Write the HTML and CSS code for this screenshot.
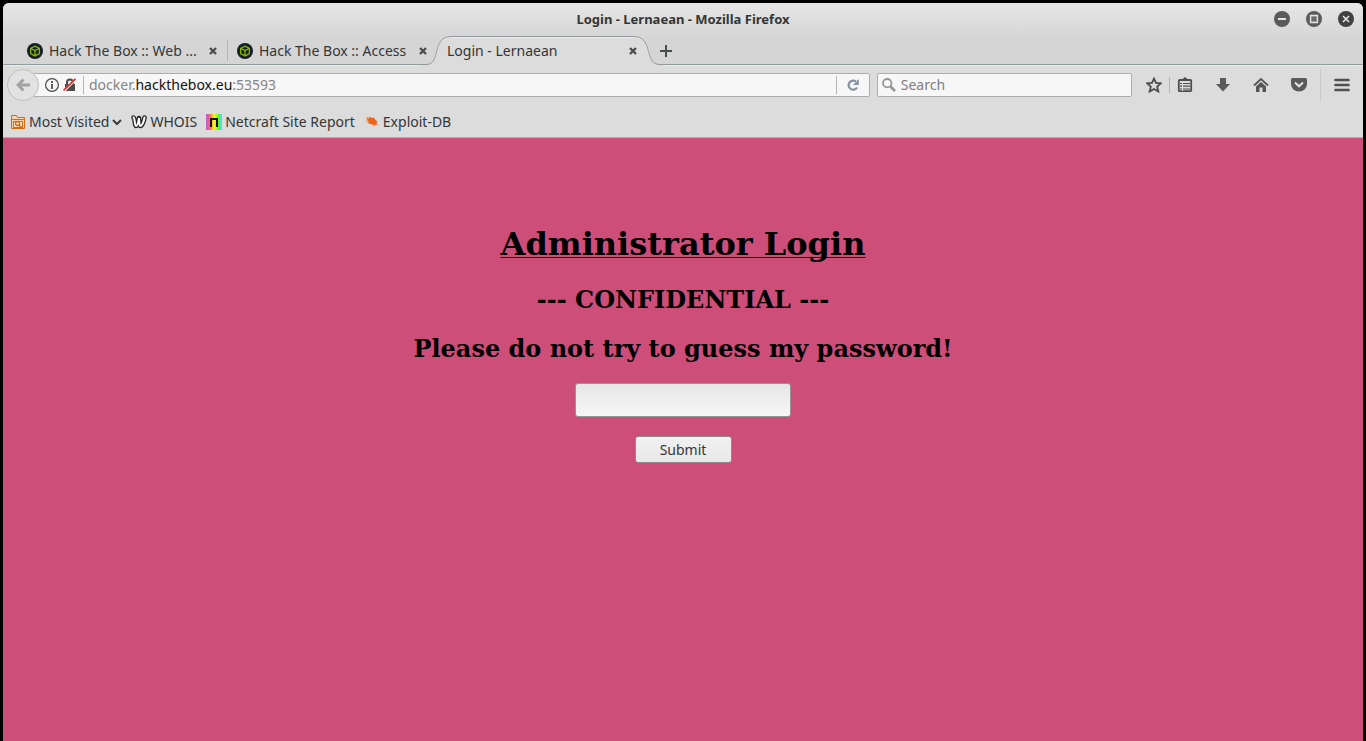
FILE: index.html
```html
<!DOCTYPE html>
<html lang="en">
<head>
<meta charset="utf-8">
<title>Login - Lernaean</title>
<link rel="stylesheet" href="styles.css">
</head>
<body>
<svg class="defs" aria-hidden="true">
  <symbol id="htb" viewBox="0 0 16 16">
    <circle cx="8" cy="8" r="8" fill="#141d2b"/>
    <path d="M8 3.200 12.400 5.400v5.200L8 12.900 3.600 10.600V5.400zM3.600 5.400 8 7.500l4.400-2.100M8 7.500v5.400" fill="none" stroke="#86b300" stroke-width="1.300"/>
  </symbol>
  <symbol id="cross" viewBox="0 0 8 8">
    <path d="M1 1l6 6M7 1L1 7" fill="none" stroke="#4a4d4e" stroke-width="2.400"/>
  </symbol>
</svg>
<div class="window">
  <header class="chrome">
    <div class="titlebar">
      <div class="title">Login - Lernaean - Mozilla Firefox</div>
      <div class="controls">
        <button class="icon-button" aria-label="Minimize"><svg width="16" height="16"><circle cx="8" cy="8" r="8" fill="#5b5b5b"/><path d="M4 8h8" stroke="#e4e4e4" stroke-width="2"/></svg></button>
        <button class="icon-button" aria-label="Maximize"><svg width="16" height="16"><circle cx="8" cy="8" r="8" fill="#5b5b5b"/><path d="M4.500 4.500h7v7h-7z" fill="#858585" stroke="#e4e4e4" stroke-width="1.300"/><path d="M6 6h4v4H6z" fill="#686868"/></svg></button>
        <button class="icon-button" aria-label="Close"><svg width="16" height="16"><circle cx="8" cy="8" r="8" fill="#414141"/><path d="M5 5l6 6M11 5l-6 6" stroke="#e4e4e4" stroke-width="1.600"/></svg></button>
      </div>
    </div>
    <nav class="tabs" aria-label="Tabs">
      <div class="tab divided"><svg class="favicon"><use href="#htb"/></svg><span class="tab-label">Hack The Box :: Web ...</span><button class="icon-button" aria-label="Close tab"><svg width="8" height="8"><use href="#cross"/></svg></button></div>
      <div class="tab"><svg class="favicon"><use href="#htb"/></svg><span class="tab-label">Hack The Box :: Access</span><button class="icon-button" aria-label="Close tab"><svg width="8" height="8"><use href="#cross"/></svg></button></div>
      <div class="tab active">
        <svg class="tab-shape" width="244" height="30" viewBox="0 0 244 30"><path d="M0 30V28.500H6C22 28.500 10 .5 32 .5H213C235 .5 223 28.500 240 28.500H244V30z" fill="#dcdcdc"/><path d="M13 25C18 18 13 1.500 32 1.500H213C232 1.500 227 18 232 25" fill="none" stroke="#ececec"/><path d="M0 28.500H6C22 28.500 10 .5 32 .5H213C235 .5 223 28.500 240 28.500H244" fill="none" stroke="#939a9e"/></svg>
        <span class="tab-label">Login - Lernaean</span><button class="icon-button" aria-label="Close tab"><svg width="8" height="8"><use href="#cross"/></svg></button>
      </div>
      <button class="icon-button new-tab" aria-label="New tab"><svg width="12" height="12"><path d="M6 0v12M0 6h12" stroke="#4a4d4e" stroke-width="2"/></svg></button>
    </nav>
    <div class="toolbar">
      <button class="back" aria-label="Back"><svg width="14" height="14"><path d="M7.500 1.500 2 7l5.500 5.500M2.500 7H14" fill="none" stroke="#a3a3a3" stroke-width="3"/></svg></button>
      <div class="address">
        <svg width="14" height="14"><circle cx="7" cy="7" r="6.400" fill="none" stroke="#4c4c4c" stroke-width="1.200"/><path d="M7 3v2M7 6v5" stroke="#4c4c4c" stroke-width="1.800"/></svg>
        <svg width="14" height="14"><path d="M4 7V4.500a3 3 0 0 1 6 0V7" fill="none" stroke="#4c4c4c" stroke-width="2"/><path d="M2 6h10v7H2z" fill="#4c4c4c"/><path d="M.5 13.500 13 1" stroke="#f7f7f7" stroke-width="2.400"/><path d="M.5 12.500 12.500.8" stroke="#dc2e2e" stroke-width="1.700"/></svg>
        <span class="url">docker.<strong>hackthebox.eu</strong>:53593</span>
        <button class="icon-button reload" aria-label="Reload"><svg width="12" height="12"><path d="M10 8.500A4.500 4.500 0 1 1 9 2.700" fill="none" stroke="#8494a1" stroke-width="2.200"/><path d="M11.800 0v6H6z" fill="#8494a1"/></svg></button>
      </div>
      <label class="search"><svg width="14" height="14"><circle cx="5.200" cy="5.200" r="4.200" fill="none" stroke="#969696" stroke-width="1.800"/><path d="M8.500 8.500l4.500 4.500" stroke="#969696" stroke-width="2.600"/></svg><input type="search" placeholder="Search" aria-label="Search"></label>
      <div class="actions">
        <button class="icon-button star" aria-label="Bookmark"><svg width="16" height="16"><path d="M8 1.500l2 4.400 4.800.5-3.600 3.200 1.100 4.900L8 12l-4.300 2.500 1.100-4.900L1.200 6.400 6 5.900z" fill="none" stroke="#4d4d4d" stroke-width="1.800"/></svg></button>
        <button class="icon-button" aria-label="Show bookmarks"><svg width="16" height="16"><path d="M4.500 3 8 0 11.500 3z" fill="#4d4d4d"/><rect x="1.800" y="3" width="12.400" height="11.200" rx="1" fill="none" stroke="#4d4d4d" stroke-width="1.800"/><path d="M3 6.500h10M3 9.200h10M3 12h10" stroke="#4d4d4d" stroke-width="1.200"/><path d="M5.500 4v10" stroke="#dcdcdc"/></svg></button>
        <button class="icon-button" aria-label="Downloads"><svg width="16" height="16"><path d="M5 1h6v6h4l-7 7.500L1 7h4z" fill="#5a5a5a"/></svg></button>
        <button class="icon-button" aria-label="Home"><svg width="16" height="16"><path d="M1 8.500 8 2l7 6.500" fill="none" stroke="#555" stroke-width="1.800"/><path d="M3 9.500 8 5l5 4.500V15H9.500v-4.500h-3V15H3z" fill="#555"/></svg></button>
        <button class="icon-button" aria-label="Pocket"><svg width="16" height="16"><path d="M1.500 1h13Q16 1 16 2.500V7A8 7.500 0 0 1 0 7V2.500Q0 1 1.500 1z" fill="#5a5a5a"/><path d="M4 5.500 8 9.300l4-3.800" fill="none" stroke="#e4e4e4" stroke-width="2"/></svg></button>
      </div>
      <button class="icon-button menu" aria-label="Menu"><svg width="16" height="14"><path d="M1.500 2h13M1.500 7h13M1.500 12h13" stroke="#505050" stroke-width="2.600" stroke-linecap="round"/></svg></button>
    </div>
    <nav class="bookmarks" aria-label="Bookmarks">
      <button class="bookmark"><svg width="16" height="16"><path d="M1.500 14.500v-13h5l1 2h7v11z" fill="#f6d3ae" stroke="#cf6c14"/><path d="M1.500 5.500h13" stroke="#cf6c14"/><rect x="3.500" y="7.500" width="9" height="6" fill="#f5e2cb" stroke="#cf6c14"/><circle cx="7.500" cy="9.500" r="2" fill="none" stroke="#cf6c14" stroke-width="1.300"/><path d="M9 11l2.500 2.500" stroke="#cf6c14" stroke-width="1.500"/></svg>Most Visited<svg width="10" height="8"><path d="M1 2l4 4 4-4" fill="none" stroke="#3d3d3d" stroke-width="2"/></svg></button>
      <a class="bookmark" href="#"><svg width="16" height="16"><path d="M2.500 3.500C4 3.500 3.500 12 5 12S7.500 7 8 4C8.500 8 8 12 9.500 12S13 7 13.500 3.500" fill="none" stroke="#222" stroke-width="4.600" stroke-linejoin="round" stroke-linecap="round"/><path d="M2.500 3.500C4 3.500 3.500 12 5 12S7.500 7 8 4C8.500 8 8 12 9.500 12S13 7 13.500 3.500" fill="none" stroke="#fff" stroke-width="2" stroke-linecap="round"/></svg>WHOIS</a>
      <a class="bookmark" href="#"><span class="netcraft"><svg width="16" height="16"><path d="M5 13V5h6v8" fill="none" stroke="#111" stroke-width="2"/></svg></span>Netcraft Site Report</a>
      <a class="bookmark" href="#"><svg width="16" height="16"><path d="M2 4l3 .5L5 2.500l3 1.500 2-.5 1 2 2.500 2-1 1 1.500 2-2.500-.2.500 1.500-2.500-1-1 .5-1.500-1.500-2.500.3L5 8.500 3 8l1-1.500z" fill="#ef6514"/><path d="M2 2.500l3 2M1 7h4M9 10l1 3M12 10l2.500 1.500" stroke="#f29662" stroke-width=".7"/></svg>Exploit-DB</a>
    </nav>
  </header>
  <main class="page">
    <h1>Administrator Login</h1>
    <h2>--- CONFIDENTIAL ---</h2>
    <h2>Please do not try to guess my password!</h2>
    <form>
      <input class="password" type="password" aria-label="Password">
      <button class="submit" type="button">Submit</button>
    </form>
  </main>
</div>
</body>
</html>
```
FILE: styles.css
```css
* { box-sizing: border-box; }
body {
  margin: 0;
  background: #000;
  color: #333637;
  font: 14px/20px "Noto Sans", "Open Sans", sans-serif;
}
svg { display: block; flex: none; }
.defs { position: absolute; width: 0; height: 0; }
button, input { font: inherit; color: inherit; }
.window {
  display: flex;
  flex-direction: column;
  min-height: 100vh;
  padding: 3px 3px 0;
}
.chrome {
  background: #dcdcdc;
  border-bottom: 1px solid #b0b0b0;
  border-radius: 6px 6px 0 0;
  background-image: linear-gradient(#e6e6e6, #d5d5d5 36px, #d5d5d5 62px, transparent 62px);
}
.icon-button {
  display: flex;
  align-items: center;
  justify-content: center;
  padding: 0;
  border: 0;
  background: none;
}
.titlebar {
  display: grid;
  grid-template-columns: 1fr auto 1fr;
  align-items: center;
  height: 33px;
  padding: 0 9px 2px;
}
.title { grid-column: 2; font-weight: bold; font-size: 13px; }
.controls { display: flex; gap: 16px; justify-content: flex-end; }
.tabs {
  display: flex;
  height: 29px;
  padding-left: 14px;
  border-bottom: 1px solid #939a9e;
}
.tab {
  position: relative;
  display: flex;
  align-items: center;
  width: 210px;
  gap: 6px;
  padding: 2px 10px 0;
}
.divided::after {
  content: "";
  position: absolute;
  right: -1px;
  top: 4px;
  width: 1px;
  height: 21px;
  background: #b5b5b5;
}
.favicon { width: 16px; height: 16px; }
.tab-label { position: relative; flex: 1; white-space: nowrap; }
.tab .icon-button { position: relative; }
.tab-shape { position: absolute; left: -17px; top: 0; }
.new-tab { margin-left: 13px; padding-top: 2px; }
.toolbar {
  display: flex;
  align-items: center;
  height: 39px;
  padding: 0 13px 0 4px;
  border-top: 1px solid #ebebeb;
}
.back {
  position: relative;
  display: grid;
  place-items: center;
  width: 32px;
  height: 32px;
  padding: 0;
  border: 1px solid #bfbfbf;
  border-radius: 50%;
  background: #e2e2e2;
}
.address, .search {
  display: flex;
  align-items: center;
  height: 24px;
  border: 1px solid #adadad;
  border-radius: 2px;
  background: #f7f7f7;
}
.address { flex: 823 1 0; gap: 4px; margin-left: -6px; padding-left: 11px; }
.url {
  flex: 1;
  margin-left: 2px;
  padding-left: 5px;
  border-left: 1px solid #b5b5b5;
  line-height: 18px;
  color: #858585;
}
.url strong { font-weight: normal; color: #111; }
.reload { width: 33px; height: 18px; border-left: 1px solid #b5b5b5; }
.search { flex: 249 1 0; gap: 5px; margin-left: 7px; padding-left: 4px; }
.search input {
  flex: 1;
  min-width: 0;
  padding: 0;
  border: 0;
  outline: 0;
  background: none;
}
.search input::placeholder { color: #808080; opacity: 1; }
.actions { display: flex; gap: 22px; margin: 0 13px 0 14px; }
.star { width: 24px; margin-right: -15px; padding-right: 7px; border-right: 1px solid #b5b5b5; }
.menu { width: 30px; height: 32px; padding-left: 13px; border-left: 1px solid #cbcbcb; }
.bookmarks { display: flex; align-items: center; gap: 9px; height: 33px; padding: 2px 7px 0; }
.bookmark {
  display: flex;
  align-items: center;
  gap: 3px;
  padding: 0;
  border: 0;
  background: none;
  color: inherit;
  text-decoration: none;
}
.netcraft {
  background: linear-gradient(90deg, #b85fd8, #f06090 20%, #ff9b20 34%, #f9f91c 50%, #63f91c 78%, #52d8ef 92%);
}
.page {
  flex: 1;
  padding: 87px 16px 40px;
  background: #cd4e78;
  color: #000;
  font-family: "DejaVu Serif", serif;
  text-align: center;
}
h1, h2 { margin: 0 0 20px; }
h1 {
  margin-bottom: 22px;
  font-size: 32px;
  line-height: 38px;
  text-decoration: underline 1px;
  text-decoration-skip-ink: none;
  text-underline-offset: 2px;
}
h2 { font-size: 24px; line-height: 29px; }
form {
  display: flex;
  flex-direction: column;
  align-items: center;
  gap: 19px;
  font-family: "Noto Sans", "Open Sans", sans-serif;
}
.password {
  width: 216px;
  height: 34px;
  padding: 4px 8px;
  border: 1px solid #969696;
  border-radius: 3px;
  background: linear-gradient(#e6e6e6, #f6f6f6);
}
.submit {
  width: 97px;
  padding: 3px 8px 2px;
  border: 1px solid #8c8c8c;
  border-radius: 3px;
  background: linear-gradient(#f1f1f1, #e8e8e8);
  color: #333637;
}
```
